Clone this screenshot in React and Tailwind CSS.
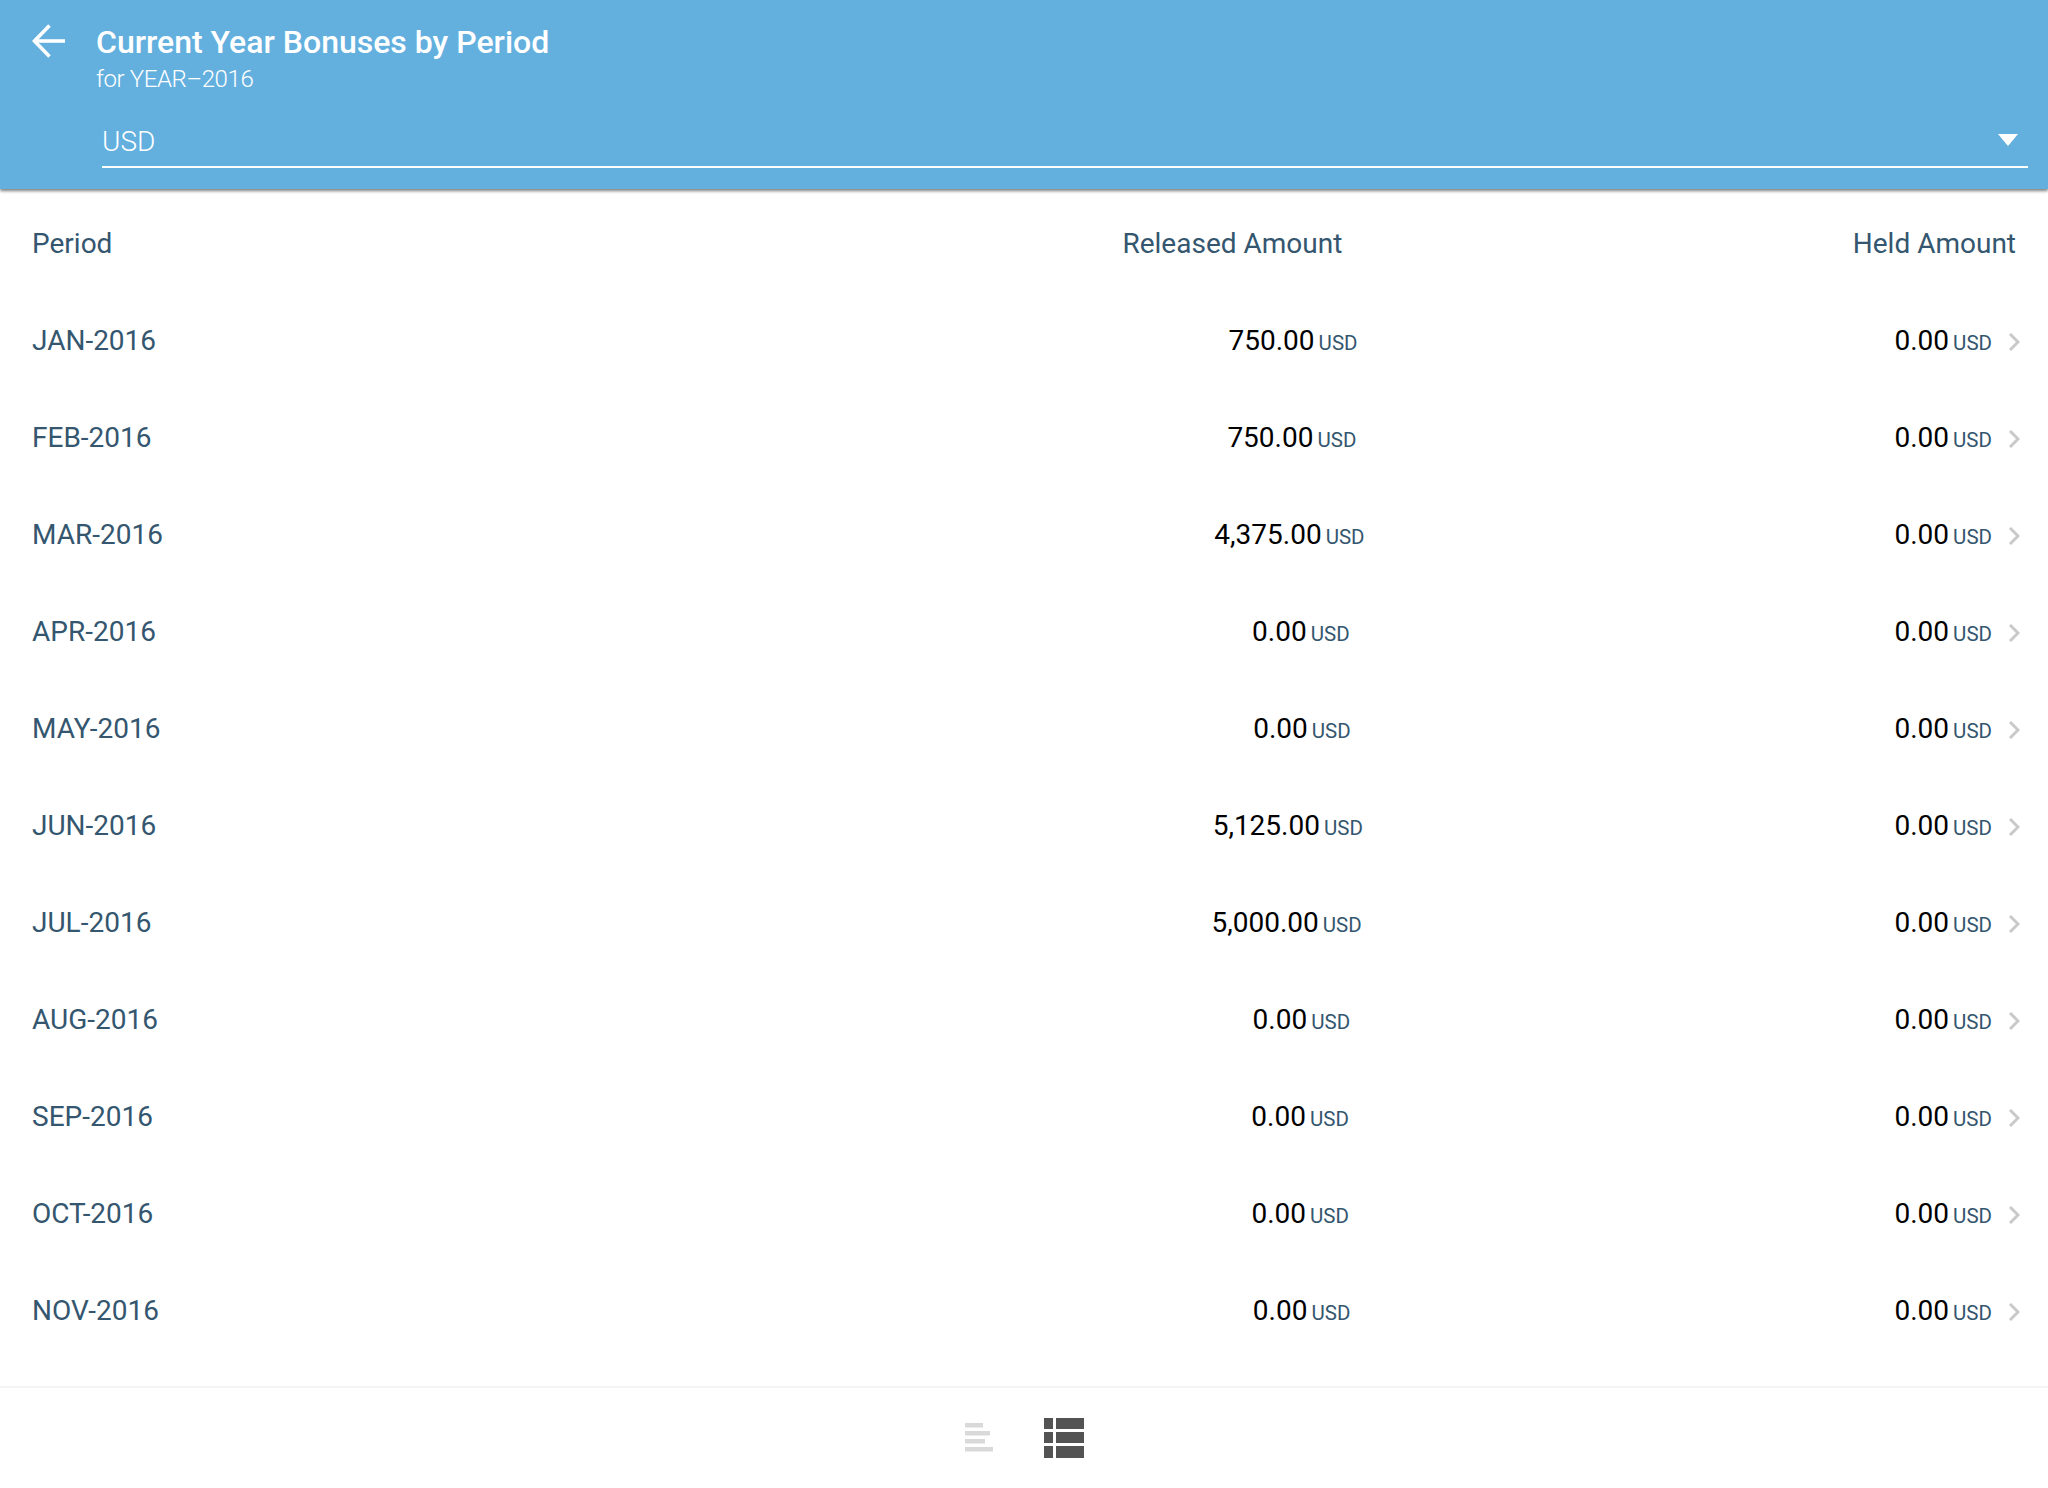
const rows = [
  ['JAN-2016', '750.00'],
  ['FEB-2016', '750.00'],
  ['MAR-2016', '4,375.00'],
  ['APR-2016', '0.00'],
  ['MAY-2016', '0.00'],
  ['JUN-2016', '5,125.00'],
  ['JUL-2016', '5,000.00'],
  ['AUG-2016', '0.00'],
  ['SEP-2016', '0.00'],
  ['OCT-2016', '0.00'],
  ['NOV-2016', '0.00'],
];

const Amount = ({ value }) => (
  <span className="whitespace-nowrap">
    <span className="text-[28px] text-black">{value}</span>
    <span className="ml-1 text-[20.5px] text-[#34566f]">USD</span>
  </span>
);

export default function App() {
  return (
    <div className="flex h-screen flex-col overflow-hidden bg-white font-['Roboto',sans-serif] text-[#34566f]">
      {/* Header */}
      <header className="relative h-[189px] shrink-0 bg-[#63b0df] shadow-[0_2px_3px_rgba(0,0,0,0.5)]">
        <div className="flex pl-[32px] pt-[24px]">
          <svg width="33" height="34" viewBox="0 0 33 34" fill="none" stroke="white" strokeWidth="3.6" className="mr-[31px]">
            <path d="M33 17H3" />
            <path d="M17.5 1.5L2.5 17l15 15.5" />
          </svg>
          <div>
            <div className="text-[32px] font-medium leading-[36px] text-white">Current Year Bonuses by Period</div>
            <div className="mt-[5px] text-[24px] font-light leading-[28px] tracking-[-0.4px] text-white">for YEAR–2016</div>
          </div>
        </div>
        <div className="ml-[102px] mr-[20px] mt-[30px] flex h-[45px] items-center justify-between border-b-2 border-white pb-[6px] pr-[10px]">
          <span className="text-[28px] font-light leading-none text-white">USD</span>
          <svg width="20" height="12" viewBox="0 0 20 12" fill="white" className="mb-[4px]">
            <path d="M0 0h20L10 12z" />
          </svg>
        </div>
      </header>

      {/* Table */}
      <main className="flex-1 pl-[32px] pr-[24px] pt-[7px]">
        <div className="flex h-[96px] items-center text-[28px]">
          <div className="flex-1 basis-auto">Period</div>
          <div className="flex-1 basis-auto text-center">Released Amount</div>
          <div className="w-[345px] pr-[8px] text-right">Held Amount</div>
        </div>
        {rows.map(([period, released]) => (
          <div key={period} className="flex h-[97px] items-center text-[28px]">
            <div className="flex-1 basis-auto whitespace-nowrap">{period}</div>
            <div className="flex-1 basis-auto text-center">
              <Amount value={released} />
            </div>
            <div className="flex w-[309px] items-center justify-end">
              <Amount value="0.00" />
              <svg width="12" height="18" viewBox="0 0 12 18" fill="none" stroke="#c9c9c9" strokeWidth="3" className="ml-[16px] mr-[4px] mt-[3px]">
                <path d="M2 1l8 8-8 8" />
              </svg>
            </div>
          </div>
        ))}
      </main>

      {/* Footer */}
      <footer className="flex h-[102px] shrink-0 items-start justify-center border-t-2 border-[#f4f4f4]">
        <svg width="28" height="31" viewBox="0 0 28 31" fill="#d9d9d9" className="mr-[51px] mt-[35px]">
          <rect x="0" y="0" width="18" height="4.5" />
          <rect x="0" y="8" width="25" height="4.5" />
          <rect x="0" y="16" width="20" height="4.5" />
          <rect x="0" y="24" width="28" height="4.5" />
        </svg>
        <svg width="40" height="40" viewBox="0 0 40 40" fill="#535353" className="mt-[30px]">
          <rect x="0" y="0" width="9" height="11" />
          <rect x="12" y="0" width="28" height="11" />
          <rect x="0" y="14" width="9" height="11" />
          <rect x="12" y="14" width="28" height="11" />
          <rect x="0" y="28" width="9" height="12" />
          <rect x="12" y="28" width="28" height="12" />
        </svg>
      </footer>
    </div>
  );
}
